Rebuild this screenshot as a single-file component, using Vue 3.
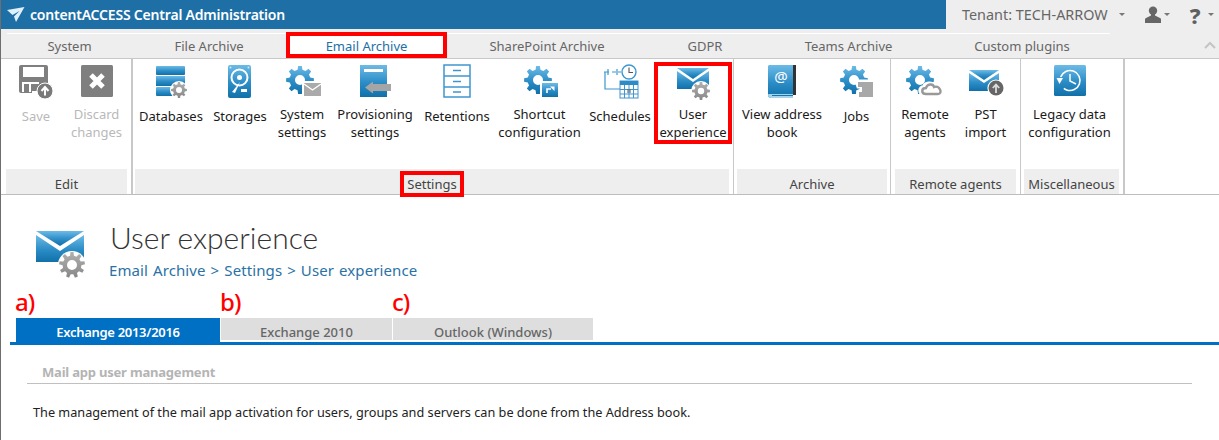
<script setup>
function gearPath(cx, cy, ro, ri, hole, n = 8) {
  let d = ''
  const step = (Math.PI * 2) / n
  for (let i = 0; i < n; i++) {
    const a = i * step - Math.PI / 2
    const pts = [
      [ri, a - step * 0.3],
      [ro, a - step * 0.17],
      [ro, a + step * 0.17],
      [ri, a + step * 0.3]
    ]
    pts.forEach(([r, t], j) => {
      const x = (cx + r * Math.cos(t)).toFixed(2)
      const y = (cy + r * Math.sin(t)).toFixed(2)
      d += (i === 0 && j === 0 ? 'M' : 'L') + x + ' ' + y + ' '
    })
  }
  d += 'Z '
  if (hole) {
    d += `M${cx - hole} ${cy} a${hole} ${hole} 0 1 0 ${hole * 2} 0 a${hole} ${hole} 0 1 0 ${-hole * 2} 0 Z`
  }
  return d
}

const blueGear = gearPath(14, 15, 14, 10.5, 5, 8)
const greyGear = gearPath(25, 25, 8, 6, 3, 8)

const tabs = [
  { label: 'System', width: 125 },
  { label: 'File Archive', width: 154 },
  { label: 'Email Archive', width: 161, active: true },
  { label: 'SharePoint Archive', width: 200 },
  { label: 'GDPR', width: 116 },
  { label: 'Teams Archive', width: 171 },
  { label: 'Custom plugins', width: 176 }
]

const groups = [
  {
    name: 'Edit', cls: 'g-edit',
    items: [
      { id: 'save', lines: ['Save'], width: 60, off: true },
      { id: 'discard', lines: ['Discard', 'changes'], width: 61, off: true }
    ]
  },
  {
    name: 'Settings', cls: 'g-settings', mark: true,
    items: [
      { id: 'databases', lines: ['Databases'], width: 72 },
      { id: 'storages', lines: ['Storages'], width: 66 },
      { id: 'system', lines: ['System', 'settings'], width: 58 },
      { id: 'provisioning', lines: ['Provisioning', 'settings'], width: 88 },
      { id: 'retentions', lines: ['Retentions'], width: 76 },
      { id: 'shortcut', lines: ['Shortcut', 'configuration'], width: 89 },
      { id: 'schedules', lines: ['Schedules'], width: 72 },
      { id: 'experience', lines: ['User', 'experience'], width: 74, mark: true }
    ]
  },
  {
    name: 'Archive', cls: 'g-archive',
    items: [
      { id: 'book', lines: ['View address', 'book'], width: 90 },
      { id: 'jobs', lines: ['Jobs'], width: 59 }
    ]
  },
  {
    name: 'Remote agents', cls: 'g-remote',
    items: [
      { id: 'remote', lines: ['Remote', 'agents'], width: 60 },
      { id: 'pst', lines: ['PST', 'import'], width: 61 }
    ]
  },
  {
    name: 'Miscellaneous', cls: 'g-misc',
    items: [{ id: 'legacy', lines: ['Legacy data', 'configuration'], width: 91 }]
  }
]
</script>

<template>
  <div class="app">
    <svg class="defs" width="0" height="0" aria-hidden="true">
      <defs>
        <linearGradient id="bl" x1="0" y1="0" x2="0" y2="1">
          <stop offset="0" stop-color="#6dbbe6" />
          <stop offset="0.55" stop-color="#2b8cc6" />
          <stop offset="1" stop-color="#1170a8" />
        </linearGradient>
        <linearGradient id="gr" x1="0" y1="0" x2="0" y2="1">
          <stop offset="0" stop-color="#b0b0b0" />
          <stop offset="1" stop-color="#888" />
        </linearGradient>
      </defs>
    </svg>

    <header class="topbar">
      <div class="brand">
        <svg class="logo" width="18" height="16" viewBox="0 0 18 16">
          <path d="M0 3 L17.5 0 L9 15 L7 9.5 L12.5 4 L5.5 8 Z" fill="#dff0fa" />
        </svg>
        <span>contentACCESS Central Administration</span>
      </div>
      <div class="tools">
        <span class="tenant">Tenant: TECH-ARROW</span>
        <span class="caret c1"></span>
        <svg class="user" width="16" height="17" viewBox="0 0 16 17">
          <circle cx="8" cy="4.8" r="4.2" fill="#666" />
          <path d="M6 8h4v1.6l5 2.4c.6.3 1 .8 1 1.5V17H0v-3.5c0-.7.4-1.2 1-1.5l5-2.4z" fill="#666" />
        </svg>
        <span class="caret c2"></span>
        <span class="help">?</span>
        <span class="caret c3"></span>
      </div>
    </header>

    <nav class="tabs">
      <div
        v-for="t in tabs"
        :key="t.label"
        class="tab"
        :class="{ active: t.active }"
        :style="{ width: t.width + 'px' }"
      >{{ t.label }}</div>
      <svg class="collapse" width="12" height="8" viewBox="0 0 12 8">
        <path d="M1 7 L6 2 L11 7" fill="none" stroke="#c4c4c4" stroke-width="2" />
      </svg>
    </nav>

    <section class="ribbon">
      <div v-for="g in groups" :key="g.name" class="group" :class="g.cls">
        <div class="items">
          <div
            v-for="it in g.items"
            :key="it.id"
            class="item"
            :class="{ off: it.off, mark: it.mark, single: it.lines.length === 1 }"
            :style="{ width: it.width + 'px' }"
          >
            <svg class="ico" width="40" height="36" viewBox="0 0 40 36">
              <g v-if="it.id === 'save'">
                <path d="M5 1h25a2 2 0 0 1 2 2v24H16v2H5a2 2 0 0 1-2-2V3a2 2 0 0 1 2-2z" fill="#7f7f7f" />
                <rect x="7" y="3" width="21" height="10" fill="#fff" />
                <rect x="6" y="18" width="17" height="2" fill="#fff" />
                <rect x="6" y="18" width="2" height="10" fill="#fff" />
                <rect x="13" y="20" width="2" height="8" fill="#fff" />
                <circle cx="29" cy="27" r="8" fill="#7a7a7a" stroke="#fff" stroke-width="1" />
                <path d="M29 31.5V24M25.5 27l3.500-4 3.500 4" fill="none" stroke="#fff" stroke-width="2" />
              </g>

              <g v-else-if="it.id === 'discard'">
                <rect x="4" y="1" width="32" height="32" rx="1.5" fill="#7f7f7f" />
                <path d="M14 11 L26 23 M26 11 L14 23" stroke="#fff" stroke-width="5" />
              </g>

              <g v-else-if="it.id === 'databases'">
                <rect x="5" y="2" width="29" height="9" rx="1" fill="url(#bl)" />
                <rect x="5" y="12" width="29" height="10" fill="url(#bl)" />
                <rect x="5" y="23" width="29" height="9" rx="1" fill="url(#bl)" />
                <circle cx="28" cy="26" r="9" fill="#fff" />
                <path :d="greyGear" fill="url(#gr)" fill-rule="evenodd" transform="translate(3 1)" />
              </g>

              <g v-else-if="it.id === 'storages'">
                <rect x="8" y="1" width="23" height="33" rx="2" fill="url(#bl)" />
                <circle cx="10.5" cy="3.5" r="1" fill="#cfe8f6" />
                <circle cx="28.5" cy="3.5" r="1" fill="#cfe8f6" />
                <circle cx="19.5" cy="13.5" r="8" fill="none" stroke="#fff" stroke-width="2" />
                <circle cx="19.5" cy="13.5" r="2.5" fill="#fff" />
                <path d="M12 28 L20 18 L15 29" fill="#fff" />
                <rect x="21" y="25" width="6" height="3" fill="#fff" />
              </g>

              <g v-else-if="it.id === 'system'">
                <path :d="blueGear" fill="url(#bl)" fill-rule="evenodd" transform="translate(4 1)" />
                <rect x="20" y="17" width="20" height="16" fill="#fff" />
                <rect x="22" y="19" width="17" height="13" fill="#aaa" />
                <path d="M22 20 L30.5 26 L39 20" fill="none" stroke="#fff" stroke-width="1.4" />
              </g>

              <g v-else-if="it.id === 'provisioning'">
                <rect x="5" y="1" width="27" height="32" fill="url(#bl)" />
                <rect x="9" y="5" width="19" height="3" fill="#fff" />
                <path d="M10 23.5 L18 17.500 V20 H36 V27 H18 V29.500 Z" fill="#a5a5a5" />
              </g>

              <g v-else-if="it.id === 'retentions'">
                <rect x="7" y="1" width="26" height="32" fill="#fff" stroke="#3d97cf" stroke-width="1.5" />
                <path d="M7 12H33M7 23H33" stroke="#3d97cf" stroke-width="1.5" />
                <path d="M16 6.5H24M16 17.5H24M16 28H24" stroke="#3d97cf" stroke-width="1.5" />
              </g>

              <g v-else-if="it.id === 'shortcut'">
                <path :d="blueGear" fill="url(#bl)" fill-rule="evenodd" transform="translate(4 1)" />
                <rect x="20" y="17" width="19" height="17" fill="#fff" />
                <rect x="22" y="19" width="16" height="14" fill="url(#bl)" />
                <path d="M27 29 V25 H31" fill="none" stroke="#fff" stroke-width="1.6" />
                <path d="M30 22.5 H34.5 V27 Z" fill="#fff" />
              </g>

              <g v-else-if="it.id === 'schedules'">
                <path d="M4 8H9M12 8H16M18 8H21M5 8V25H20" fill="none" stroke="#3d97cf" stroke-width="1.2" />
                <path d="M8 5V11M17 5V11" stroke="#3d97cf" stroke-width="1.2" />
                <circle cx="29" cy="8" r="7" fill="#fff" stroke="#3d97cf" stroke-width="1.4" />
                <path d="M29 3.5V8.5H33" fill="none" stroke="#555" stroke-width="1.1" />
                <rect x="20" y="17" width="18" height="17" fill="#fff" stroke="#3d97cf" />
                <rect x="20" y="17" width="18" height="4" fill="#2b8cc6" />
                <path d="M24.5 21V34M29 21V34M33.500 21V34M20 25.500H38M20 30H38" stroke="#3d97cf" stroke-width="1" />
                <rect x="27" y="25" width="4" height="4" fill="#666" opacity=".55" />
              </g>

              <g v-else-if="it.id === 'experience'">
                <path d="M4 4 H36 L20 15 Z" fill="url(#bl)" />
                <path d="M4 7 L20 18 L36 7 V25 H4 Z" fill="url(#bl)" />
                <circle cx="28" cy="27" r="10" fill="#fff" />
                <path :d="gearPath(28, 27, 9, 6.6, 3.2, 8)" fill="url(#gr)" fill-rule="evenodd" />
              </g>

              <g v-else-if="it.id === 'book'">
                <rect x="31" y="1" width="3" height="30" fill="#333" />
                <path d="M7 1H31V34H9C7.500 34 6 33 6 31V2Z" fill="url(#bl)" />
                <path d="M6 31 C6 29.500 7.500 30 9 30H31V31H10V32H31V34H9C7.500 34 6 33 6 31Z" fill="#a6d3ec" />
                <text x="19" y="18" text-anchor="middle" class="at">@</text>
              </g>

              <g v-else-if="it.id === 'jobs'">
                <path :d="blueGear" fill="url(#bl)" fill-rule="evenodd" transform="translate(3 1)" />
                <path d="M19 17 H36 V34 H21 V28 H24 V23 H21 Z" fill="#fff" stroke="#fff" stroke-width="3" />
                <path d="M21 18 H36 V33 H22 V28 H25 V23 H21 Z" fill="#a8a8a8" />
              </g>

              <g v-else-if="it.id === 'remote'">
                <path :d="blueGear" fill="url(#bl)" fill-rule="evenodd" transform="translate(1 1)" />
                <path d="M19 30 C14 30 14 23 19 23 C20 19 27 18 29 22 C35 20 39 30 33 30 Z" fill="#fff" stroke="#fff" stroke-width="4" />
                <path d="M21 30 C16 30 16 24 21 24 C22 20 28 19 29 23 C35 21 38 30 33 30 Z" fill="#fff" stroke="#999" stroke-width="2.400" />
              </g>

              <g v-else-if="it.id === 'pst'">
                <path d="M3 6 H33 L18 16 Z" fill="url(#bl)" />
                <path d="M3 9 L18 19 L33 9 V27 H3 Z" fill="url(#bl)" />
                <circle cx="30" cy="24" r="8.600" fill="#fff" />
                <circle cx="30" cy="24" r="7.500" fill="#666" />
                <path d="M30 29V21M26.800 24l3.200-3.500 3.200 3.500" fill="none" stroke="#ddd" stroke-width="1.800" />
              </g>

              <g v-else-if="it.id === 'legacy'">
                <rect x="4" y="1" width="32" height="31" rx="1.500" fill="url(#bl)" />
                <circle cx="20" cy="16.500" r="10" fill="none" stroke="#fff" stroke-width="1.600" stroke-dasharray="50 13" transform="rotate(200 20 16.500)" />
                <path d="M6.500 14 L13 14 L9.500 20 Z" fill="#fff" />
                <path d="M20 10V17L26 20" fill="none" stroke="#fff" stroke-width="1.500" />
              </g>
            </svg>
            <div class="label">
              <div v-for="l in it.lines" :key="l">{{ l }}</div>
            </div>
          </div>
        </div>
        <div class="foot"><span :class="{ mark: g.mark }">{{ g.name }}</span></div>
      </div>
    </section>

    <main class="content">
      <div class="head">
        <svg class="head-ico" width="50" height="50" viewBox="0 0 50 50">
          <path d="M0 1 H48 L24 16 Z" fill="url(#bl)" />
          <path d="M0 5 L24 21 L48 5 V32 H0 Z" fill="url(#bl)" />
          <circle cx="36" cy="35" r="14" fill="#fff" />
          <path :d="gearPath(36, 35, 13, 9.400, 5, 9)" fill="url(#gr)" fill-rule="evenodd" />
        </svg>
        <div class="head-text">
          <h1>User experience</h1>
          <p class="crumb">Email Archive &gt; Settings &gt; User experience</p>
        </div>
      </div>

      <div class="subtabs">
        <div class="sub on"><span class="tag">a)</span>Exchange 2013/2016</div>
        <div class="sub s2"><span class="tag">b)</span>Exchange 2010</div>
        <div class="sub s3"><span class="tag">c)</span>Outlook (Windows)</div>
      </div>

      <div class="section">
        <h2>Mail app user management</h2>
        <p>The management of the mail app activation for users, groups and servers can be done from the Address book.</p>
      </div>
    </main>
  </div>
</template>

<style>
html, body { margin: 0; overflow: hidden; background: #fff; }
</style>

<style scoped>
.app {
  width: 1219px;
  height: 440px;
  box-sizing: border-box;
  overflow: hidden;
  border-left: 1px solid #6e6e6e;
  background: #fff;
  font-family: "Noto Sans", "Open Sans", sans-serif;
  font-size: 13px;
  color: #222;
  position: relative;
}
.defs { position: absolute; }

.topbar { display: flex; height: 29px; background: #eee; }
.brand {
  width: 945px;
  background: #1e6fa6;
  color: #fff;
  display: flex;
  align-items: center;
  padding-left: 6px;
  box-sizing: border-box;
  font-size: 14px;
  font-weight: 600;
  letter-spacing: -0.2px;
  gap: 5px;
}
.tools { flex: 1; display: flex; align-items: center; color: #666; padding-left: 16px; }
.tenant { font-size: 14.4px; }
.caret { flex: none; width: 0; height: 0; border: 3px solid transparent; border-top-color: #777; margin-top: 3px; }
.c1 { margin-left: 11px; }
.user { margin-left: 20px; }
.c2 { margin-left: 3px; }
.help { font-size: 22px; font-weight: 800; margin-left: 20px; line-height: 1; color: #5f5f5f; }
.c3 { margin-left: 7px; }

.tabs { position: relative; display: flex; height: 29px; background: #eee; padding-left: 6px; }
.tab {
  box-sizing: border-box;
  flex: none;
  margin-top: 4px;
  height: 25px;
  border-top: 1px solid #fff;
  text-align: center;
  line-height: 24px;
  color: #666;
  font-size: 13px;
}
.tab.active {
  margin-top: 3px;
  height: 26px;
  background: #fff;
  color: #1d6fa6;
  border: 4px solid #f00;
  line-height: 20px;
}
.collapse { position: absolute; right: 3px; top: 12px; }

.ribbon {
  display: flex;
  height: 137px;
  box-sizing: border-box;
  border-top: 1px solid #c8c8c8;
  border-bottom: 1px solid #bdbdbd;
}
.group { display: flex; flex-direction: column; box-sizing: border-box; border-right: 1px solid #c8c8c8; flex: none; }
.g-edit { width: 132px; padding: 0 4px 0 5px; border-right-width: 2px; }
.g-settings { width: 601px; padding: 0 4px 0 2px; }
.g-archive { width: 157px; padding: 0 3px 0 3px; }
.g-remote { width: 130px; padding: 0 4px 0 4px; }
.g-misc { width: 104px; padding: 0 4px 0 3px; border-right-width: 2px; }

.items { flex: 1; display: flex; }
.item { flex: none; display: flex; flex-direction: column; align-items: center; padding-top: 5px; position: relative; box-sizing: border-box; }
.ico { display: block; overflow: visible; }
.at { font-size: 15px; fill: #fff; font-family: "Noto Sans", sans-serif; }
.label { line-height: 18px; text-align: center; margin-top: 5px; white-space: nowrap; color: #1a1a1a; font-size: 13px; }
.item.single .label { margin-top: 7px; }
.item.off .label { color: #b9b9b9; }
.item.mark::after {
  content: "";
  position: absolute;
  left: -2px;
  right: -2px;
  top: 3px;
  height: 82px;
  box-sizing: border-box;
  border: 4px solid #f00;
  pointer-events: none;
}
.foot { height: 25px; background: #eee; text-align: center; line-height: 31px; color: #444; font-size: 13px; }
.foot .mark { position: relative; display: inline-block; }
.foot .mark::after {
  content: "";
  position: absolute;
  left: -7px;
  right: -7px;
  top: 2px;
  height: 26px;
  box-sizing: border-box;
  border: 4px solid #f00;
}

.content { display: block; }
.head { display: flex; padding: 35px 0 0 35px; height: 89px; box-sizing: border-box; }
.head-ico { flex: none; display: block; }
.head-text { margin-left: 24px; margin-top: -13px; }
h1 {
  margin: 0;
  font-family: Lato, "Open Sans", sans-serif;
  font-weight: 300;
  font-size: 30px;
  line-height: 40px;
  color: #333;
}
.crumb { margin: 3px 0 0 -1px; font-size: 15px; letter-spacing: 0.1px; word-spacing: 1px; line-height: 20px; color: #2a72a5; }

.subtabs {
  display: flex;
  align-items: flex-start;
  margin: 34px 0 0 9px;
  padding-left: 6px;
  height: 24px;
  border-bottom: 3px solid #0070c4;
  font-size: 13px;
}
.sub { position: relative; height: 22px; line-height: 29px; text-align: center; background: #dedede; color: #666; font-weight: 500; box-sizing: border-box; }
.sub.on { height: 24px; width: 204px; background: #0070c4; color: #fff; font-weight: 600; letter-spacing: -0.3px; }
.s2 { width: 171px; margin-left: 1px; }
.s3 { width: 200px; margin-left: 1px; }
.tag {
  position: absolute;
  top: -31px;
  left: -1px;
  color: #f00;
  font-size: 24px;
  line-height: 30px;
  font-weight: 500;
  letter-spacing: -1px;
}

.section { margin: 16px 27px 0 26px; }
h2 {
  margin: 0;
  padding: 0 0 0 15px;
  height: 22px;
  line-height: 22px;
  font-size: 13px;
  font-weight: 700;
  letter-spacing: -0.2px;
  color: #b4b4b4;
  border-bottom: 1px solid #c0c0c0;
}
.section p { margin: 18px 0 0 6px; line-height: 20px; font-size: 12.7px; color: #222; }
</style>
